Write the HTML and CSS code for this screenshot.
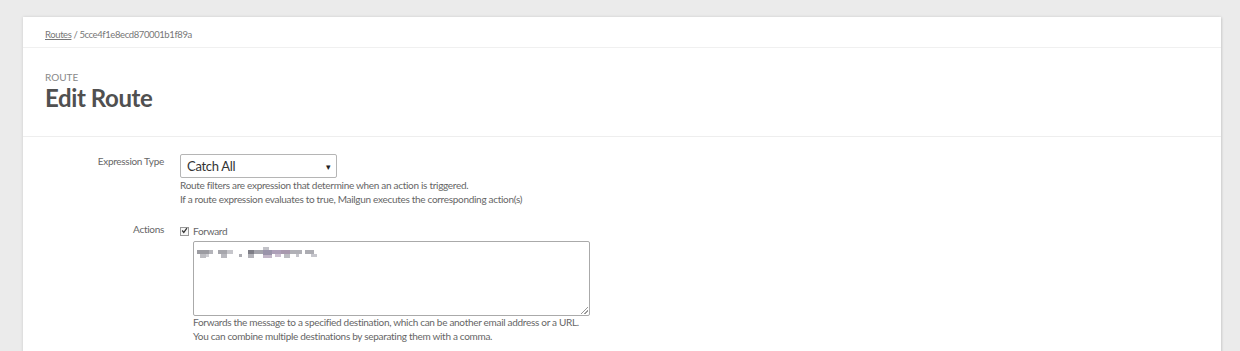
FILE: index.html
```html
<!DOCTYPE html>
<html lang="en">
<head>
  <meta charset="UTF-8">
  <meta name="viewport" content="width=device-width, initial-scale=1.0">
  <title>Edit Route</title>
  <link rel="stylesheet" href="styles.css">
</head>
<body>
  <div class="card">
    <div class="crumbs">
      <a href="#" class="crumb-link">Routes</a> / 5cce4f1e8ecd870001b1f89a
    </div>

    <div class="page-head">
      <div class="eyebrow">Route</div>
      <h1 class="title">Edit Route</h1>
    </div>

    <!-- form rows -->
    <div class="form">
      <div class="row">
        <div class="label">Expression Type</div>
        <div class="control">
          <div class="select">
            <span>Catch All</span>
            <span class="arrow">&#9662;</span>
          </div>
          <p class="help">Route filters are expression that determine when an action is triggered.<br>If a route expression evaluates to true, Mailgun executes the corresponding action(s)</p>
        </div>
      </div>

      <div class="row row-actions">
        <div class="label">Actions</div>
        <div class="control">
          <label class="check">
            <span class="box">
              <svg width="9" height="9" viewBox="0 0 9 9"><path d="M1.5 4.5 L3.6 7 L7.6 1.6" fill="none" stroke="#333" stroke-width="1.6"/></svg>
            </span>
            Forward
          </label>
          <div class="sub">
            <div class="textarea">
              <!-- pixelated address, redacted in the original -->
              <svg class="blur" width="124" height="13" viewBox="0 0 124 13">
                <rect x="0" y="3" width="12" height="4" fill="#9c9ca2"/>
                <rect x="3" y="7" width="6" height="4" fill="#bdbdc2"/>
                <rect x="12" y="3" width="4" height="4" fill="#b4b4ba"/>
                <rect x="9" y="7" width="3" height="3" fill="#cdcdd2"/>
                <rect x="21" y="3" width="12" height="4" fill="#a6a6ac"/>
                <rect x="24" y="7" width="6" height="4" fill="#b8b8be"/>
                <rect x="30" y="3" width="6" height="4" fill="#c6c6cb"/>
                <rect x="42" y="7" width="3" height="3" fill="#acacb2"/>
                <rect x="51" y="3" width="6" height="4" fill="#7e7e86"/>
                <rect x="51" y="7" width="6" height="4" fill="#b2b2b8"/>
                <rect x="57" y="3" width="9" height="4" fill="#a4a4ac"/>
                <rect x="66" y="0" width="6" height="3" fill="#c2c2c8"/>
                <rect x="66" y="3" width="9" height="5" fill="#9a94aa"/>
                <rect x="66" y="8" width="9" height="3" fill="#c2b6c8"/>
                <rect x="75" y="3" width="9" height="4" fill="#ad9fb8"/>
                <rect x="78" y="7" width="6" height="3" fill="#cbbfd0"/>
                <rect x="84" y="3" width="9" height="4" fill="#a898ae"/>
                <rect x="87" y="7" width="6" height="4" fill="#bcbcc2"/>
                <rect x="93" y="3" width="12" height="4" fill="#b0b0b6"/>
                <rect x="99" y="7" width="3" height="3" fill="#c4c4ca"/>
                <rect x="108" y="3" width="9" height="4" fill="#acacb2"/>
                <rect x="114" y="7" width="6" height="3" fill="#c6c6cc"/>
              </svg>
              <span class="grip"></span>
            </div>
            <p class="help help-under">Forwards the message to a specified destination, which can be another email address or a URL.<br>You can combine multiple destinations by separating them with a comma.</p>
          </div>
        </div>
      </div>
    </div>
  </div>
</body>
</html>
```

FILE: styles.css
```css
body{
  margin: 0;
  padding: 17px 19px 0 23px;
  background: #ebebeb;
  font-family: Lato, "Open Sans", sans-serif;
  color: #555;
  overflow: hidden;
}
.card{
  background: #fff;
  box-shadow: 0 0 3px rgba(0,0,0,0.12), 1px 1px 2px rgba(0,0,0,0.08);
  height: 400px;
}
.crumbs{
  height: 30px;
  border-bottom: 1px solid #f0f0f0;
  padding: 0 22px;
  font-size: 9.5px;
  letter-spacing: -0.4px;
  line-height: 35px;
  color: #777;
}
.crumb-link{
  color: #777;
}
.page-head{
  height: 89px;
  border-bottom: 1px solid #eee;
  padding: 23px 22px 0;
  box-sizing: border-box;
}
.eyebrow{
  font-size: 10px;
  text-transform: uppercase;
  color: #888;
}
.title{
  margin: 0;
  font-size: 24px;
  font-weight: 700;
  letter-spacing: -0.4px;
  color: #505050;
}
.form{
  padding-top: 17px;
}
.row{
  display: flex;
  gap: 16px;
}
.label{
  width: 141px;
  text-align: right;
  font-size: 10px;
  letter-spacing: -0.3px;
  color: #666;
  padding-top: 1px;
}
.control{
  flex: 1;
}
.select{
  width: 157px;
  height: 24px;
  box-sizing: border-box;
  border: 1px solid #b5b5b5;
  border-radius: 2px;
  display: flex;
  align-items: center;
  justify-content: space-between;
  padding: 0 5px 0 6px;
  font-size: 13px;
  letter-spacing: -0.3px;
  color: #333;
}
.arrow{
  font-size: 9px;
  color: #222;
}
.help{
  margin: 0;
  font-size: 10px;
  letter-spacing: -0.3px;
  line-height: 14px;
  color: #666;
}
.help-under{
  margin-top: -1px;
}
.row-actions{
  margin-top: 16px;
}
.check{
  display: flex;
  align-items: center;
  gap: 4px;
  font-size: 10px;
  letter-spacing: -0.3px;
  color: #666;
  height: 14px;
  margin-top: 2px;
}
.box{
  width: 9px;
  height: 9px;
  border: 1px solid #999;
  box-sizing: border-box;
  display: flex;
  align-items: center;
  justify-content: center;
  background: #f6f6f6;
}
.box svg{
  margin-top: -2px;
}
.sub{
  padding-left: 13px;
  margin-top: 3px;
}
.textarea{
  position: relative;
  width: 397px;
  height: 75px;
  box-sizing: border-box;
  border: 1px solid #aaa;
  border-radius: 2px;
  padding: 5px 3px;
}
.blur{
  display: block;
}
.grip{
  position: absolute;
  right: 1px;
  bottom: 1px;
  width: 7px;
  height: 7px;
  background: linear-gradient(135deg, transparent 45%, #999 45%, #999 55%, transparent 55%, transparent 70%, #999 70%, #999 80%, transparent 80%);
}
```
